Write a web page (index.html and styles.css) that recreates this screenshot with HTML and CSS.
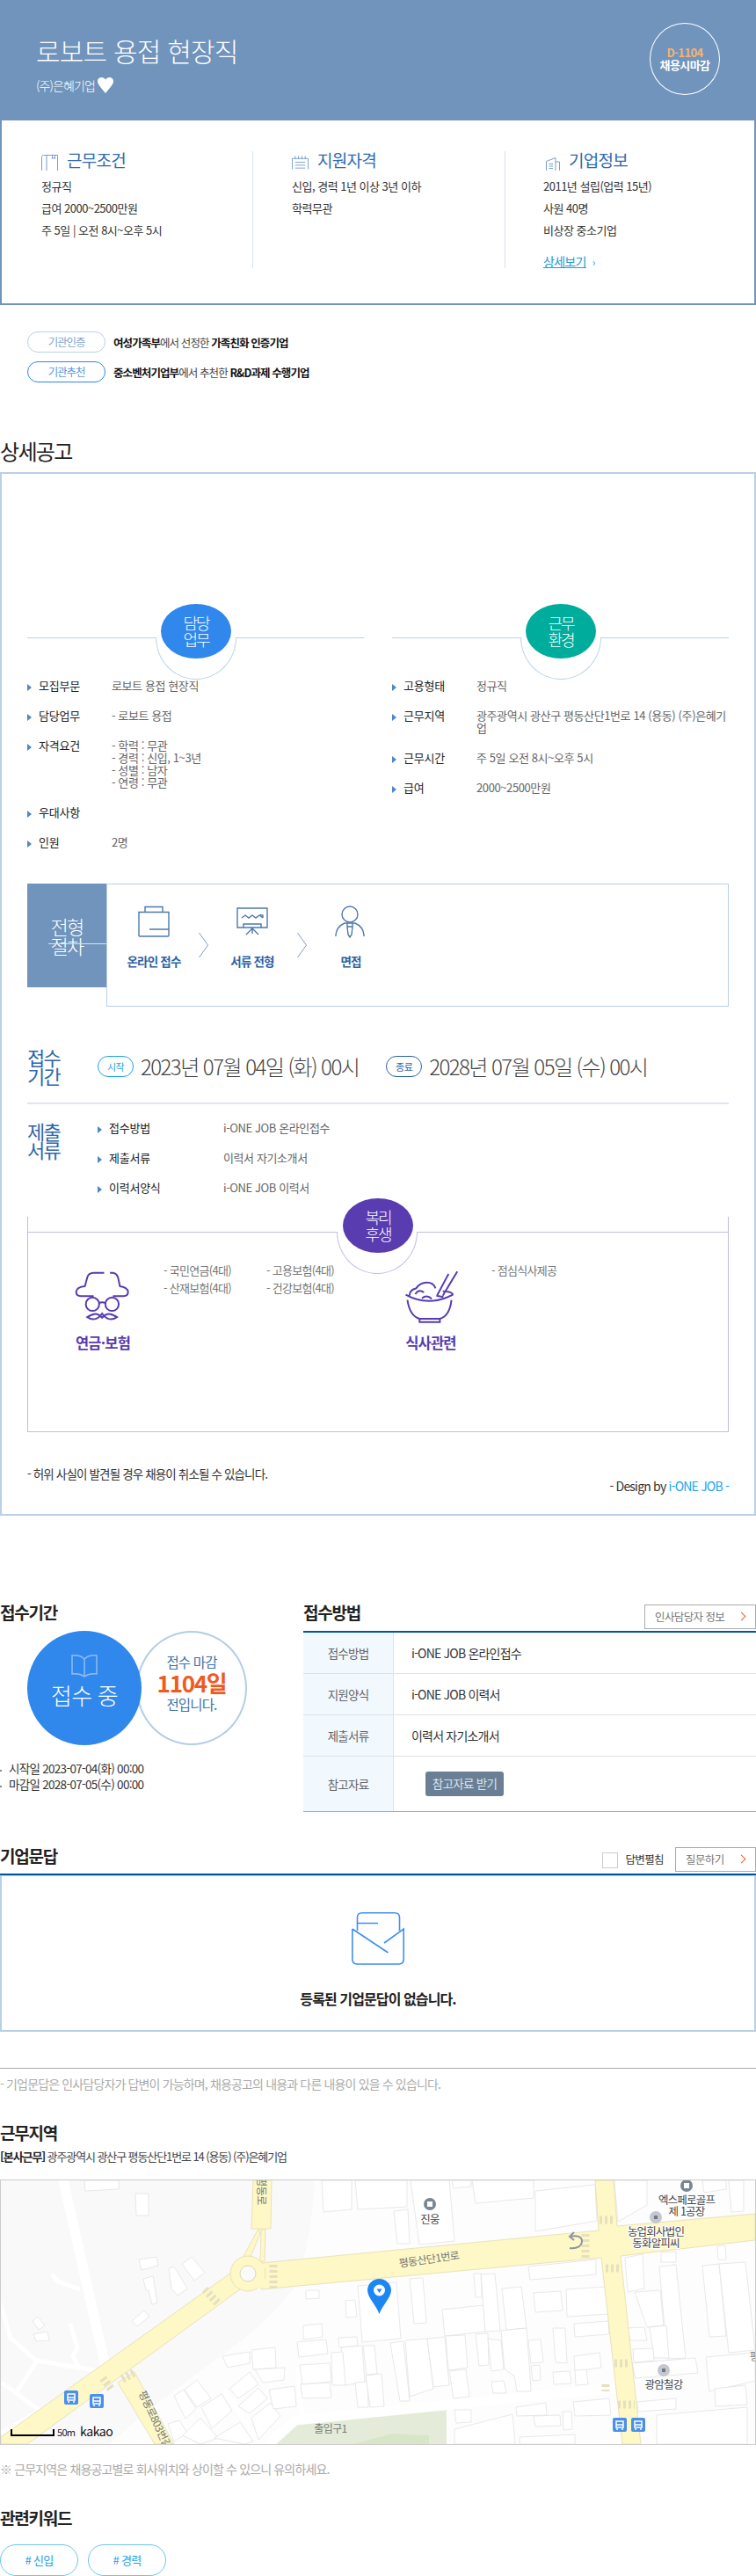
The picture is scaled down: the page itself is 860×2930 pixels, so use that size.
FILE: index.html
```html
<!DOCTYPE html>
<html lang="ko">
<head>
<meta charset="utf-8">
<title>로보트 용접 현장직</title>
<link rel="stylesheet" href="styles.css">
</head>
<body>
<header class="hero">
  <div>
    <h1 class="hero-title">로보트 용접 현장직</h1>
    <div class="hero-company">(주)은혜기업
      <svg class="heart" viewBox="0 0 18 18"><path d="M9 18C5 13 0 8 0 4.500C0 1.500 2.200 0 4.500 0C6.500 0 8 1 9 2.500C10 1 11.500 0 13.500 0C15.800 0 18 1.500 18 4.500C18 8 13 13 9 18Z"/></svg>
    </div>
  </div>
  <div class="dday"><b>D-1104</b><span>채용시마감</span></div>
</header>
<section class="summary">
  <div class="sum-col">
    <h2 class="sum-head">
      <svg class="sum-icon" viewBox="0 0 19 18"><path d="M.5 18V2.500Q.5 .5 2.500 .5H18.500V18M6 .5V18M18.500 6V18M12.500 .5V4.500L14 3.500L15.500 4.500V.5"/></svg>
      근무조건</h2>
    <p>정규직</p><p>급여 2000~2500만원</p><p>주 5일 | 오전 8시~오후 5시</p>
  </div>
  <div class="sum-col sum-mid">
    <h2 class="sum-head">
      <svg class="sum-icon" viewBox="0 0 20 16"><path d="M.5 16V3H19.500V16M4 0V4M8 0V4M12 0V4M16 0V4M4 7.500H16M4 11H16M4 14.500H16"/></svg>
      지원자격</h2>
    <p>신입, 경력 1년 이상 3년 이하</p><p>학력무관</p>
  </div>
  <div class="sum-col sum-last">
    <h2 class="sum-head">
      <svg class="sum-icon sum-icon-b" viewBox="0 0 16 15"><path d="M.5 15V4.500L11 .5V15M11 5H15.500V15M3.500 7.500H8M3.500 10H8M3.500 12.500H8" /></svg>
      기업정보</h2>
    <p>2011년 설립(업력 15년)</p><p>사원 40명</p><p>비상장 중소기업</p>
    <a class="sum-more">상세보기</a><span class="sum-more-arrow">›</span>
  </div>
</section>

<div class="certs">
  <div class="cert"><span class="cert-pill">기관인증</span><span><b>여성가족부</b>에서 선정한 <b>가족친화 인증기업</b></span></div>
  <div class="cert"><span class="cert-pill cert-pill-blue">기관추천</span><span><b>중소벤처기업부</b>에서 추천한 <b>R&amp;D과제 수행기업</b></span></div>
</div>

<h2 class="detail-title">상세공고</h2>
<section class="detail">
  <div class="duo">
    <div class="duo-col">
      <div class="orb-head"><div class="orb-arc"></div><div class="orb orb-blue">담당<br>업무</div></div>
      <dl class="rows">
        <div class="row"><dt>모집부문</dt><dd>로보트 용접 현장직</dd></div>
        <div class="row"><dt>담당업무</dt><dd>- 로보트 용접</dd></div>
        <div class="row"><dt>자격요건</dt><dd>- 학력 : 무관<br>- 경력 : 신입, 1~3년<br>- 성별 : 남자<br>- 연령 : 무관</dd></div>
        <div class="row"><dt>우대사항</dt><dd></dd></div>
        <div class="row"><dt>인원</dt><dd>2명</dd></div>
      </dl>
    </div>
    <div class="duo-col">
      <div class="orb-head"><div class="orb-arc"></div><div class="orb orb-green">근무<br>환경</div></div>
      <dl class="rows">
        <div class="row"><dt>고용형태</dt><dd>정규직</dd></div>
        <div class="row"><dt>근무지역</dt><dd class="dd-break">광주광역시 광산구 평동산단1번로 14 (용동) (주)은혜기업</dd></div>
        <div class="row"><dt>근무시간</dt><dd>주 5일 오전 8시~오후 5시</dd></div>
        <div class="row"><dt>급여</dt><dd>2000~2500만원</dd></div>
      </dl>
    </div>
  </div>

  <div class="process">
    <div class="process-label"><span>전형<br>절차</span><i class="process-rule"></i></div>
    <div class="process-box">
      <div class="step">
        <svg viewBox="0 0 40 40"><path d="M10 7V1.500H30V7M3 7.500H37V34Q37 35 36 35H4Q3 35 3 34ZM15 27H37"/></svg>
        <span>온라인 접수</span>
      </div>
      <svg class="step-arrow" viewBox="0 0 11 28"><path d="M.5 0L10.500 14L.5 28"/></svg>
      <div class="step">
        <svg viewBox="0 0 40 40"><path d="M3 3H37V25H3ZM8 14L12 11L16 14L20 11L24 14L28 11L32 14M29 10.500L32 11V14M10 25V21H30V25M20 25V32M20 26L13 33M20 26L27 33"/></svg>
        <span>서류 전형</span>
      </div>
      <svg class="step-arrow" viewBox="0 0 11 28"><path d="M.5 0L10.500 14L.5 28"/></svg>
      <div class="step">
        <svg viewBox="0 0 40 40"><circle cx="19" cy="10" r="9"/><path d="M3 35V33Q4 24 13 20H25Q34 24 35 33V35M16 20V24H22V20M16 24L17 33L19 36L21 33L22 24"/></svg>
        <span>면접</span>
      </div>
    </div>
  </div>

  <div class="period">
    <div class="side-label">접수<br>기간</div>
    <span class="period-pill">시작</span><span class="period-date">2023년 07월 04일 (화) 00시</span>
    <span class="period-pill period-pill-end">종료</span><span class="period-date">2028년 07월 05일 (수) 00시</span>
  </div>

  <div class="submit">
    <div class="side-label">제출<br>서류</div>
    <dl class="rows rows-wide">
      <div class="row"><dt>접수방법</dt><dd>i-ONE JOB 온라인접수</dd></div>
      <div class="row"><dt>제출서류</dt><dd>이력서 자기소개서</dd></div>
      <div class="row"><dt>이력서양식</dt><dd>i-ONE JOB 이력서</dd></div>
    </dl>
  </div>

  <div class="welfare">
    <div class="welfare-box">
      <i class="welfare-line"></i>
      <div class="benefit">
        <div class="benefit-main">
          <svg viewBox="50 45 190 175"><path d="M148 50H112Q94 50 90 66L82 96Q54 98 52 115Q52 130 68 130H112M168 50H178Q192 52 196 68L202 96Q228 100 230 115Q230 130 214 130H178M130 155Q141 148 153 155M90 202C110 215 128 210 141 190C154 210 172 215 192 202C176 192 160 184 141 204C122 184 106 192 90 202Z"/><circle cx="108" cy="158" r="23"/><circle cx="175" cy="158" r="23"/></svg>
          <strong>연금·보험</strong>
        </div>
        <ul class="benefit-list"><li>- 국민연금(4대)</li><li>- 고용보험(4대)</li><li>- 산재보험(4대)</li><li>- 건강보험(4대)</li></ul>
      </div>
      <div class="benefit">
        <div class="benefit-main">
          <svg viewBox="1165 38 190 182"><path d="M1172 122Q1250 165 1335 122M1178 140Q1186 195 1220 205H1290Q1324 195 1330 140M1220 205V216H1290V205M1185 125Q1186 104 1208 100Q1222 80 1245 80Q1268 80 1275 100M1300 110Q1330 110 1336 122M1205 120Q1218 100 1235 114M1228 134Q1245 120 1262 136M1320 50L1280 125M1350 42L1300 125M1278 125L1302 130"/></svg>
          <strong>식사관련</strong>
        </div>
        <ul class="benefit-list"><li>- 점심식사제공</li></ul>
      </div>
    </div>
    <div class="orb-arc orb-arc-purple"></div>
    <div class="orb orb-purple">복리<br>후생</div>
  </div>

  <p class="detail-note">- 허위 사실이 발견될 경우 채용이 취소될 수 있습니다.</p>
  <p class="design">- Design by <span>i-ONE JOB -</span></p>
</section>

<div class="apply">
  <section class="apply-left">
    <div class="sec-head"><h3>접수기간</h3></div>
    <div class="venn">
      <div class="venn-on">
        <svg viewBox="0 0 30 26"><path d="M15 5Q10 0 1 1V22Q9 21 15 25Q21 21 29 22V1Q20 0 15 5ZM15 5V25"/></svg>
        <span>접수 중</span>
      </div>
      <div class="venn-off">접수 마감<b>1104일</b>전입니다.</div>
    </div>
    <ul class="dates"><li>시작일 2023-07-04(화) 00:00</li><li>마감일 2028-07-05(수) 00:00</li></ul>
  </section>
  <section class="apply-right">
    <div class="sec-head"><h3>접수방법</h3><a class="btn-line btn-wide">인사담당자 정보</a></div>
    <table class="method">
      <tr><th>접수방법</th><td>i-ONE JOB 온라인접수</td></tr>
      <tr><th>지원양식</th><td>i-ONE JOB 이력서</td></tr>
      <tr><th>제출서류</th><td>이력서 자기소개서</td></tr>
      <tr class="method-last"><th>참고자료</th><td><a class="btn-file">참고자료 받기</a></td></tr>
    </table>
  </section>
</div>

<section class="qa">
  <div class="sec-head sec-head-qa"><h3>기업문답</h3>
    <div class="qa-tools"><i class="check"></i><span class="check-label">답변펼침</span><a class="btn-line">질문하기</a></div>
  </div>
  <div class="qa-box">
    <svg viewBox="0 0 60 60"><path d="M6.500 21V6Q6.500 .8 12 .8H49Q54.500 .8 54.500 6V21M6.500 12.500H30M.8 19V53Q.8 59 6 59H54Q59.200 59 59.200 53V19L37 35M.8 19L41.500 46"/></svg>
    <strong>등록된 기업문답이 없습니다.</strong>
  </div>
  <p class="qa-note">- 기업문답은 인사담당자가 답변이 가능하며, 채용공고의 내용과 다른 내용이 있을 수 있습니다.</p>
</section>

<section class="loc">
  <h3>근무지역</h3>
  <p class="loc-addr"><b>[본사근무]</b> 광주광역시 광산구 평동산단1번로 14 (용동) (주)은혜기업</p>
  <div class="map">
    <svg viewBox="0 0 858 300" width="858" height="300">
      <rect width="858" height="300" fill="#f9f9fa"/>
      <path d="M357 0Q352 80 333 123Q300 165 250 200Q180 250 123 300H858V0Z" fill="#fdfdfd"/>
      <path class="green" d="M304 300L335 268L507 260V300Z"/>
      <path d="M400 300L445 288L487 290V300Z" fill="#d8e6c8"/>
      <g class="lane">
        <polyline points="71,0 119,212"/><polyline points="58,107 65,115 90,124"/><polyline points="113,217 40,205 10,178 0,140"/><polyline points="40,207 17,242 45,262"/><polyline points="0,230 15,240"/><polyline points="0,287 45,262 113,218"/><polyline points="79,163 87,190 82,200 88,212"/><polyline points="337,211 343,267"/><polyline points="253,238 293,295"/>
      </g>
      <g class="road-w"><polyline points="305,300 335,273 700,236"/><polyline points="71,0 119,212"/></g>
      <g class="bld">
        <path d="M95 0H134V10L96 12Z"/><path d="M153 15H168V40H154Z"/><path d="M157 90L177 87L179 97L160 102Z"/><path d="M162 112L173 109L178 139L172 141L168 125L165 125Z"/><path d="M191 100L197 98L212 123L201 131L194 123Z"/><path d="M206 95L217 87L232 105L220 114Z"/><path d="M149 160L163 148L169 155L155 166Z"/><path d="M36 160L42 155L50 165L43 170Z"/><path d="M37 175L53 172L55 182L40 183Z"/>
        <path d="M365 0H399V33L367 36Z"/><path d="M403 0H462V30L406 33Z"/><path d="M447 35L463 33L465 72L451 72Z"/><path d="M466 0H510L516 69L476 73Z"/><path d="M513 0H535V7L515 9Z"/><path d="M536 0H606V20L540 26Z"/><path d="M608 12L676 5L678 46L608 58Z"/><path d="M698 0H735V28L702 47Z"/><path d="M798 0H825V10L800 14Z"/><path d="M828 0H845V35L831 36Z"/>
        <path d="M600 98L677 90L677 107L602 113Z"/><path d="M347 125L362 125V134L347 135Z"/><path d="M392 137L403 136L405 155L393 156Z"/><path d="M465 112L480 111L484 162L470 163Z"/><path d="M406 120L450 116L455 180L411 184Z"/><path d="M502 147L549 142L551 172L505 177Z"/><path d="M546 107L562 106L568 171L551 172Z"/><path d="M538 106H546L547 133H540Z"/><path d="M570 123L592 121L598 168L575 170Z"/><path d="M606 128L637 126L639 148L608 150Z"/><path d="M643 124L688 121L691 152L644 155Z"/><path d="M652 163L691 160L692 175L653 178Z"/><path d="M628 168H642L644 208L631 207Z"/><path d="M652 200L681 196L683 213L653 217Z"/><path d="M628 218L647 217L649 231L629 232Z"/><path d="M653 216L666 215L668 232L654 233Z"/>
        <path d="M344 165L365 163L366 178L344 181Z"/><path d="M337 184L370 181L372 197L339 201Z"/><path d="M384 179L405 178L406 188L385 190Z"/><path d="M387 190L411 188L414 230L390 233Z"/><path d="M376 196L389 195L392 233H377Z"/><path d="M412 188L425 188L428 220L416 221Z"/><path d="M340 210L374 208L376 229L343 232Z"/><path d="M341 232L374 230L376 247L343 248Z"/><path d="M403 230L417 229L418 258H406Z"/><path d="M415 222L433 220L436 257L420 258Z"/><path d="M443 185L458 183L465 251H454Z"/><path d="M460 182L485 180L492 237L465 246Z"/><path d="M485 180L505 178L510 233L492 235Z"/><path d="M506 177L528 176L531 213L509 216Z"/><path d="M510 217L529 215L533 246L515 248Z"/><path d="M540 175L554 174L555 210L544 211Z"/><path d="M554 180L569 182L572 215L558 217Z"/><path d="M569 171L598 168L602 222L603 240L587 240L584 222L573 215Z"/><path d="M600 182L614 181L617 207L603 208Z"/><path d="M603 211L613 210L614 227L605 228Z"/><path d="M558 229L572 228L575 242L560 242Z"/>
        <path d="M710 88L730 84L732 123L713 127Z"/><path d="M751 82L768 81V93H751Z"/><path d="M749 98L768 96L779 202L758 203Z"/><path d="M798 97L817 95L825 177L806 178Z"/><path d="M817 95L847 93L858 193L828 196Z"/><path d="M721 127L750 125L754 165L735 167Z"/><path d="M713 168L732 167L735 182L716 182Z"/><path d="M738 167L757 165L760 202L743 202Z"/><path d="M815 75L824 74L825 90L816 90Z"/><path d="M719 192L742 191L743 205L720 207Z"/><path d="M802 201L858 196V228L806 240Z"/><path d="M718 208L790 202L793 219L722 225Z"/><path d="M812 237L847 233L849 255L813 257Z"/><path d="M724 252L768 248V260L725 263Z"/><path d="M746 267L849 258V300H746Z"/>
        <path d="M516 283L582 266L585 300H516Z"/><path d="M516 261H535V275L518 276Z"/><path d="M586 258L620 253L621 267L587 268Z"/><path d="M606 268L636 267L637 279L608 280Z"/><path d="M651 252L692 248L694 267L653 268Z"/><path d="M639 263L649 263L650 283L640 284Z"/><path d="M590 292L653 289V300H590Z"/>
        <path d="M197 245L208 238L222 260L210 271Z"/><path d="M209 238L223 227L239 248L223 258Z"/><path d="M228 258L251 243L263 262L240 282Z"/><path d="M260 237L283 218L293 232L270 248Z"/><path d="M270 257L293 236L303 248L283 265Z"/><path d="M285 270L307 253L318 268L293 295Z"/><path d="M305 238L334 234L336 257L310 260Z"/><path d="M285 193L312 190L313 213L287 215Z"/><path d="M252 200L283 195L283 208L258 213Z"/><path d="M289 215L323 213L322 227L298 230Z"/><path d="M190 277L203 273L212 287L197 297Z"/><path d="M207 290L227 270L247 293L227 300Z"/><path d="M243 293L272 275L287 297L277 300Z"/>
      </g>
      <g class="road">
        <path d="M133 230L152 218L197 300H175Z"/>
        <path d="M262 105L0 292V300H30L272 124Z"/>
        <path d="M287 0H308L307 55H285Z"/>
        <path d="M293 55L275 88L282 92L295 60ZM296 56L295 92L300 92L301 56Z"/>
        <path d="M296 94L680 57L676 0H697L701 52L858 38V68L705 86L728 300H707L683 88L296 124Z"/>
        <circle cx="281" cy="106" r="20"/>
      </g>
      <path class="road-fill" d="M262 106L285 90L300 96V122L275 122ZM672 60L704 56L708 84L686 88L674 86Z"/>
      <circle cx="281" cy="106" r="9" fill="#fafafa" stroke="#ddd8b5"/>
      <g class="walk">
        <path d="M310 96V123"/><path d="M232 124L247 140"/><path d="M116 225L126 238"/><path d="M138 226L153 218"/>
        <path d="M665 61V89"/><path d="M681 45H697"/><path d="M688 100H705"/><path d="M698 208H713"/><path d="M702 255H721"/><path d="M688 232V240"/>
      </g>
      <g class="uturn"><path d="M647 77C655 78 661 75 661 69C661 64 655 62 648 64M652 59L647 64L652 68"/></g>
      <g class="poi-dark"><circle cx="488" cy="27" r="7"/><circle cx="780" cy="6" r="7"/></g>
      <g class="poi-light"><circle cx="745" cy="42" r="7"/><circle cx="754" cy="216" r="7"/></g>
      <g class="poi-mark"><rect x="485" y="24" width="6" height="6"/><rect x="777" y="3" width="6" height="6"/></g>
      <g class="poi-mark-dark"><rect x="743" y="40" width="4" height="4"/><rect x="752" y="214" width="4" height="4"/></g>
      <g class="lbl">
        <text x="488" y="49">진웅</text>
        <text x="780" y="27">엑스페로골프</text><text x="780" y="40">제 1공장</text>
        <text x="745" y="63">농업회사법인</text><text x="745" y="76">동화알피씨</text>
        <text x="754" y="237">광암철강</text>
      </g>
      <g class="lbl-road">
        <text x="487" y="94" transform="rotate(-8 487 90)">평동산단1번로</text>
        <text x="375" y="287">출입구1</text>
        <text x="175" y="276" transform="rotate(65 175 272)">평동로803번길</text>
        <text x="296" y="16" transform="rotate(90 296 12)">평동로</text>
        <text x="857" y="205">평</text>
      </g>
      <g class="bus">
        <rect x="72" y="239" width="16" height="16" rx="2"/><rect x="101" y="243" width="16" height="16" rx="2"/><rect x="696" y="270" width="16" height="16" rx="2"/><rect x="717" y="270" width="16" height="16" rx="2"/>
      </g>
      <g class="bus-mark">
        <path d="M76 243H84V250H76ZM76 252H78M82 252H84M76 247H84"/><path d="M105 247H113V254H105ZM105 256H107M111 256H113M105 251H113"/><path d="M700 274H708V281H700ZM700 283H702M706 283H708M700 278H708"/><path d="M721 274H729V281H721ZM721 283H723M727 283H729M721 278H729"/>
      </g>
      <path d="M12 283V290H60V283" fill="none" stroke="#000" stroke-width="2"/>
      <text x="64" y="291" class="scale">50m</text>
      <text x="90" y="291" class="kakao">kakao</text>
      <path d="M430.500 112C423 112 417 118 417 125C417 133 427 142 430.500 152C434 142 444 133 444 125C444 118 438 112 430.500 112Z" fill="#1c86f2"/>
      <circle cx="430.500" cy="125" r="6.500" fill="#fff"/>
      <path d="M427.500 123.500H433.500L430.500 128Z" fill="#1c86f2"/>
    </svg>
  </div>
  <p class="loc-note">※ 근무지역은 채용공고별로 회사위치와 상이할 수 있으니 유의하세요.</p>
</section>

<section class="kw">
  <h3>관련키워드</h3>
  <div class="kw-list"><a class="kw-pill"># 신입</a><a class="kw-pill"># 경력</a></div>
</section>
</body>
</html>
```
FILE: styles.css
```css
* { box-sizing: border-box; }
html { overflow-x: hidden; }
html, body { margin: 0; padding: 0; }
body {
  width: 860px;
  overflow-x: clip;
  font-family: "Noto Sans CJK KR", "Noto Sans", sans-serif;
  color: #333;
  background: #fff;
  font-size: 13px;
}
h1, h2, h3, p, dl, dd, dt, ul { margin: 0; padding: 0; }
ul { list-style: none; }
b, strong { font-weight: 700; }
i { font-style: normal; display: block; }

/* hero */
.hero {
  height: 137px;
  background: #7094bc;
  display: flex;
  justify-content: space-between;
  padding: 26px 41px 0;
  color: #fff;
}
.hero-title { font-size: 30px; line-height: 40px; font-weight: 300; letter-spacing: -.8px; margin-top: 11px; }
.hero-company { display: flex; align-items: center; gap: 3px; font-size: 14px; line-height: 20px; letter-spacing: -.9px; margin-top: 10px; font-weight: 300; }
.heart { width: 18px; height: 18px; fill: #fff; }
.dday {
  width: 80px; height: 82px; border: 1px solid #fff; border-radius: 50%;
  display: flex; flex-direction: column; align-items: center; justify-content: center;
  font-size: 13px; line-height: 14px; letter-spacing: -.6px; font-weight: 700;
  padding-bottom: 1px;
}
.dday b { color: #f6b56e; }

.summary {
  height: 210px;
  border: 2px solid #7094bc;
  border-top: 0;
  display: grid;
  grid-template-columns: 286px 287px 1fr;
  padding-top: 35px;
  align-items: start;
}
.sum-col { height: 133px; padding-left: 45px; border-right: 1px solid #d8e2ee; }
.sum-mid { padding-left: 44px; }
.sum-last { border-right: 0; padding-left: 43px; }
.sum-head {
  display: flex; align-items: flex-end; gap: 10px; height: 24px; margin-top: -2px;
  font-size: 19px; line-height: 24px; font-weight: 400; letter-spacing: -.7px; color: #2f6ab0; margin-bottom: 5px;
}
.sum-icon { width: 19px; height: 18px; fill: none; stroke: #7b9fc9; stroke-width: 1; flex: none; }
.sum-icon-b { width: 16px; height: 15px; margin-left: 3px; }
.sum-col p { font-size: 13px; line-height: 25px; letter-spacing: -.5px; color: #333; }
.sum-more { display: inline-block; margin-top: 14px; font-size: 14px; line-height: 18px; color: #1e9ad6; text-decoration: underline; letter-spacing: -.7px; }
.sum-more-arrow { color: #1e9ad6; font-size: 12px; margin-left: 7px; }

/* certifications */
.certs { margin-top: 30px; display: flex; flex-direction: column; gap: 10px; padding-left: 31px; }
.cert { display: flex; align-items: center; gap: 9px; height: 24px; font-size: 12.500px; letter-spacing: -.9px; color: #444; }
.cert b { color: #111; }
.cert-pill {
  width: 89px; height: 24px; border: 1px solid #b9d0e8; border-radius: 12px;
  font-size: 12.500px; line-height: 22px; text-align: center; color: #7fa6cd; letter-spacing: -1.100px;
}
.cert-pill-blue { border-color: #2f86eb; color: #5a98dc; }

/* detail */
.detail-title { margin-top: 66px; font-size: 24px; line-height: 24px; font-weight: 400; letter-spacing: -1.700px; color: #222; }
.detail { margin-top: 12px; border: 2px solid #b9cfe6; height: 1187px; padding: 148px 29px 0; }
.duo { display: flex; gap: 32px; }
.duo-col { width: 383px; }
.orb-head { position: relative; height: 86px; background: linear-gradient(#b9d3e6, #b9d3e6) 0 38px / 100% 1px no-repeat; }
.orb {
  position: absolute; top: 0; left: 152px;
  width: 80px; height: 62px; border-radius: 50%;
  color: #fff; font-size: 18px; line-height: 18.500px; letter-spacing: -2px; text-align: center; padding-top: 12px; font-weight: 300;
  z-index: 2;
}
.orb-arc {
  position: absolute; top: 38px; left: 146px;
  width: 92px; height: 48px;
  background: #fff;
  border: 1px solid #b9d3e6; border-top: 0;
  border-radius: 0 0 46px 46px / 0 0 48px 48px;
}
.orb-blue { background: #3087ec; }
.orb-green { background: #00ad9c; }
.rows { display: flex; flex-direction: column; gap: 20px; }
.row { display: grid; grid-template-columns: 96px 1fr; font-size: 13px; line-height: 14px; }
.row dt { position: relative; padding-left: 13px; color: #222; letter-spacing: -.25px; }
.row dt::before {
  content: ""; position: absolute; left: 0; top: 5px;
  border-left: 5px solid #4f86c6; border-top: 4px solid transparent; border-bottom: 4px solid transparent;
}
.row dd { color: #666; letter-spacing: -.4px; }
.dd-break { word-break: break-all; }

.process { display: flex; margin-top: 40px; align-items: flex-start; height: 140px; }
.process-label {
  position: relative; width: 90px; height: 118px; background: #7094bc; color: #fff;
  font-size: 22px; line-height: 22px; letter-spacing: -1.800px; text-align: center; padding-top: 37px; font-weight: 300;
}
.process-rule { position: absolute; left: 24px; right: 0; top: 68px; height: 1px; background: #d7e2ef; }
.process-box { flex: 1; height: 140px; border: 1px solid #b9cfe6; display: flex; align-items: flex-start; padding: 24px 0 0 22px; }
.step { width: 62px; display: flex; flex-direction: column; align-items: center; flex: none; }
.step svg { width: 40px; height: 40px; fill: none; stroke: #4e78ad; stroke-width: 1.400; overflow: visible; }
.step span { white-space: nowrap; margin-top: 14px; font-size: 13.500px; line-height: 18px; font-weight: 700; letter-spacing: -.8px; color: #2e62a3; }
.step-arrow { width: 11px; height: 28px; fill: none; stroke: #7d9dc4; stroke-width: 1; margin: 31px 19px 0 20px; flex: none; }

.period { display: flex; align-items: center; margin-top: 47px; padding-bottom: 20px; border-bottom: 2px solid #dde6f1; height: 64px; }
.side-label { width: 80px; flex: none; font-size: 22px; line-height: 21px; letter-spacing: -1.700px; color: #2f66a8; font-weight: 400; }
.period-pill {
  width: 41px; height: 24px; border: 1px solid #1ba3e8; border-radius: 12px; color: #1ba3e8;
  font-size: 11px; line-height: 22px; text-align: center; letter-spacing: -.5px; flex: none;
}
.period-pill-end { border-color: #2a62a8; color: #2a62a8; margin-left: 31px; }
.period-date { margin-left: 8px; font-size: 24px; line-height: 30px; letter-spacing: -1.550px; color: #444; font-weight: 300; white-space: nowrap; }

.submit { display: flex; padding-top: 20px; height: 103px; }
.rows-wide { flex: 1; }
.rows-wide .row { grid-template-columns: 143px 1fr; }

.welfare { position: relative; margin-top: 4px; padding-top: 21px; }
.welfare-box {
  position: relative; height: 245px;
  border: 1px solid #c3bce4; border-top: 0;
  display: grid; grid-template-columns: 373px 1fr;
  padding-top: 51px;
}
.welfare-line { position: absolute; left: -1px; right: -1px; top: 17px; height: 1px; background: #c3bce4; }
.orb-purple { background: #583cb0; left: 359px; }
.orb-arc-purple { top: 38px; left: 352px; border-color: #c3bce4; z-index: 1; }
.benefit { display: flex; padding-left: 45px; align-items: flex-start; }
.benefit-main { width: 80px; display: flex; flex-direction: column; align-items: center; flex: none; padding-top: 10px; }
.benefit-main svg { width: 63px; height: 60px; fill: none; stroke: #583cb0; stroke-width: 6; overflow: visible; }
.benefit-main strong { white-space: nowrap; margin-top: 12px; font-size: 16.500px; line-height: 20px; letter-spacing: -.8px; color: #583cb0; }
.benefit-list { display: grid; grid-template-columns: 117px 117px; margin-left: 29px; font-size: 13px; line-height: 20px; letter-spacing: -.7px; color: #777; }

.detail-note { margin-top: 40px; font-size: 13.500px; line-height: 14px; letter-spacing: -.85px; color: #333; }
.design { text-align: right; font-size: 14px; line-height: 14px; letter-spacing: -.8px; color: #333; }
.design span { color: #1ba3e8; }

/* apply */
.apply { display: grid; grid-template-columns: 345px 515px; margin-top: 100px; }
.sec-head { display: flex; justify-content: space-between; align-items: flex-start; height: 31px; }
h3 { font-size: 19px; line-height: 20px; font-weight: 700; letter-spacing: -1.200px; color: #222; }
.btn-line {
  position: relative; display: block; width: 92px; height: 28px; margin-top: 1px;
  border: 1px solid #aaa; font-size: 12.500px; line-height: 26px; padding-left: 11px; color: #777; letter-spacing: -.6px;
}
.btn-wide { width: 127px; }
.btn-line::after {
  content: ""; position: absolute; right: 12px; top: 9px; width: 6px; height: 6px;
  border-top: 1px solid #f0622a; border-right: 1px solid #f0622a; transform: rotate(45deg);
}
.venn { display: flex; margin-left: 31px; height: 130px; }
.venn-on {
  position: relative; z-index: 1; width: 130px; height: 130px; border-radius: 50%; background: #3087ec; color: #fff;
  display: flex; flex-direction: column; align-items: center; padding-top: 27px; flex: none;
}
.venn-on svg { width: 30px; height: 26px; fill: none; stroke: #8fbdf4; stroke-width: 1.500; }
.venn-on span { font-size: 26px; line-height: 30px; font-weight: 300; letter-spacing: -.8px; margin-top: 5px; }
.venn-off {
  width: 126px; height: 130px; margin-left: -6px; border: 2px solid #b5cde5; border-radius: 50%;
  display: flex; flex-direction: column; align-items: center; padding-top: 22px;
  font-size: 15.500px; line-height: 22px; letter-spacing: -.85px; color: #3f73a8;
}
.venn-off b { font-size: 26px; line-height: 26px; letter-spacing: -1.300px; color: #f05a22; }
.dates { margin-top: 17px; font-size: 13.500px; line-height: 18px; letter-spacing: -.7px; color: #333; }
.dates li { position: relative; padding-left: 10px; }
.dates li::before { content: ""; position: absolute; left: 0; top: 11px; width: 2px; height: 2px; background: #888; }

.method { width: 515px; border-collapse: separate; border-spacing: 0; border-top: 2px solid #0053a5; border-bottom: 1px solid #aaa; table-layout: fixed; }
.method th { width: 103px; height: 47px; background: #f1f8fe; border-right: 1px solid #dce5ee; border-bottom: 1px solid #dfe3e8; font-size: 13.500px; font-weight: 400; color: #666; letter-spacing: -.75px; }
.method td { padding-left: 20px; border-bottom: 1px solid #dfe3e8; font-size: 14px; color: #333; letter-spacing: -.8px; }
.method-last th { height: 62px; border-bottom: 0; }
.method-last td { border-bottom: 0; padding-left: 36px; }
.btn-file { display: block; width: 89px; height: 28px; background: #6a7f95; border-radius: 3px; color: #dbe4ec; font-size: 13.500px; line-height: 26px; text-align: center; letter-spacing: -.7px; }

/* qa */
.qa { margin-top: 40px; }
.sec-head-qa { height: 32px; border-bottom: 2px solid #0053a5; }
.qa-tools { display: flex; align-items: flex-start; }
.check { width: 18px; height: 18px; border: 1px solid #ccc; margin-top: 6px; margin-right: 8px; }
.check-label { font-size: 12.500px; line-height: 28px; color: #333; letter-spacing: -.6px; margin-right: 13px; }
.qa-tools .btn-line { margin-top: 0; }
.qa-box { height: 178px; border: 2px solid #b9cfe6; border-top: 1px solid #b9cfe6; display: flex; flex-direction: column; align-items: center; padding-top: 41px; }
.qa-box svg { width: 60px; height: 60px; fill: none; stroke: #3f8ff0; stroke-width: 1.600; }
.qa-box strong { margin-top: 26px; font-size: 16px; line-height: 24px; letter-spacing: -.9px; color: #222; }
.qa-note { margin-top: 41px; border-top: 1px solid #aaa; padding-top: 7px; font-size: 14px; line-height: 20px; letter-spacing: -.85px; color: #aaa; }

.loc { margin-top: 36px; }
.loc-addr { margin-top: 9px; font-size: 13px; line-height: 16px; letter-spacing: -1.100px; color: #444; }
.loc-addr b { color: #222; }
.map { margin-top: 18px; height: 302px; border: 1px solid #ccc; overflow: hidden; }
.map svg { display: block; font-family: "Noto Sans CJK KR", sans-serif; }
.green { fill: #e4ecd9; }
.lane polyline { fill: none; stroke: #fff; stroke-width: 5; }
.lane polyline:first-child { stroke-width: 11; }
.road-w polyline { fill: none; stroke: #fff; stroke-width: 11; }
.bld path { fill: #fff; stroke: #e2e2e2; stroke-width: .8; }
.road > * { fill: #fdf8c6; stroke: #e3dcae; stroke-width: .8; }
.road-fill { fill: #fdf8c6; }
.walk path { fill: none; stroke: #e6e0bd; stroke-width: 9; stroke-dasharray: 3 3; }
.uturn path { fill: none; stroke: #8d95a3; stroke-width: 2; }
.poi-dark circle { fill: #7a8793; }
.poi-light circle { fill: #c4c8ce; }
.poi-mark rect { fill: #fff; }
.poi-mark-dark rect { fill: #6f7a86; }
.lbl text { font-size: 12.500px; text-anchor: middle; fill: #444; letter-spacing: -.8px; paint-order: stroke; stroke: #fff; stroke-width: 2; }
.lbl-road text { font-size: 12px; text-anchor: middle; fill: #777; letter-spacing: -.6px; }
.bus rect { fill: #4a90e8; }
.bus-mark path { fill: none; stroke: #fff; stroke-width: 1.500; }
.scale { font-size: 11px; fill: #222; letter-spacing: -.7px; }
.kakao { font-size: 14px; fill: #111; letter-spacing: -.4px; }
.loc-note { margin-top: 17px; font-size: 14px; line-height: 20px; letter-spacing: -.85px; color: #aaa; }

.kw { margin-top: 36px; }
.kw-list { display: flex; gap: 11px; margin-top: 20px; }
.kw-pill { width: 89px; height: 36px; border: 1px solid #6ac3ee; border-radius: 18px; font-size: 13px; line-height: 34px; text-align: center; color: #1ba3e8; letter-spacing: -.7px; }
```
